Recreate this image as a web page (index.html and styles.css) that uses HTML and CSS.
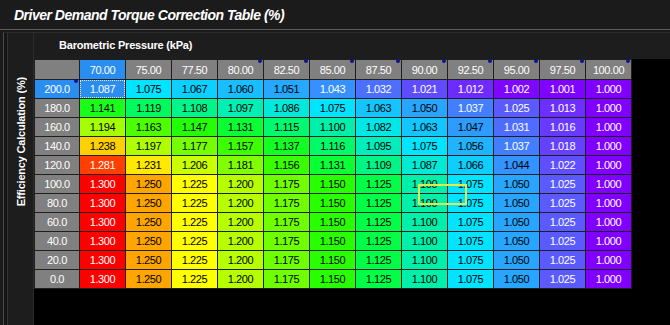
FILE: index.html
```html
<!DOCTYPE html>
<html>
<head>
<meta charset="utf-8">
<link rel="stylesheet" href="styles.css">
</head>
<body>
<div class="title">Driver Demand Torque Correction Table (%)</div>
<div class="frame">
  <div class="outer">
    <div class="inner">
      <div class="side"><span class="vlabel">Efficiency Calculation (%)</span></div>
      <div class="main">
        <div class="xlabel">Barometric Pressure (kPa)</div>
        <div class="area">
          <div class="mapwrap">
            <div class="map" id="map"></div>
            <div class="cursor"></div>
          </div>
        </div>
      </div>
    </div>
  </div>
</div>
<script src="script.js"></script>
</body>
</html>
```
FILE: styles.css
```css
html, body {
  margin: 0;
  padding: 0;
  background: #1b1b1b;
  overflow: hidden;
}
body {
  height: 325px;
  display: flex;
  flex-direction: column;
  font-family: "Liberation Sans", Arial, sans-serif;
  color: #fff;
}
.title {
  height: 29px;
  flex: none;
  padding-left: 14px;
  font-style: italic;
  font-weight: bold;
  font-size: 14px;
  line-height: 30px;
  letter-spacing: -0.5px;
  white-space: nowrap;
}
.frame {
  flex: 1;
  display: flex;
  flex-direction: column;
  border-top: 1px solid #5a5a5a;
  padding: 2px 0 0 3px;
  min-height: 0;
}
.outer {
  flex: 1;
  display: flex;
  border-left: 1px solid #4a4a4a;
  border-top: 1px solid #2c2c2c;
  padding-left: 3px;
  background: #151515;
  min-height: 0;
}
.inner {
  flex: 1;
  display: flex;
  border-left: 1px solid #303030;
  background: #1d1d1d;
  min-height: 0;
}
.side {
  width: 26px;
  flex: none;
  border-right: 1px solid #2c2c2c;
  display: flex;
  justify-content: center;
  align-items: flex-start;
  padding-top: 44px;
  box-sizing: border-box;
}
.vlabel {
  writing-mode: vertical-rl;
  transform: rotate(180deg);
  font-weight: bold;
  font-size: 11px;
  letter-spacing: -0.2px;
  white-space: nowrap;
}
.main {
  flex: 1;
  display: flex;
  flex-direction: column;
  min-width: 0;
}
.xlabel {
  height: 26px;
  flex: none;
  padding-left: 25px;
  font-weight: bold;
  font-size: 11px;
  line-height: 24px;
  letter-spacing: -0.2px;
  white-space: nowrap;
}
.area {
  flex: 1;
  background: #000;
}
.mapwrap {
  position: relative;
  display: inline-block;
}
.map {
  display: grid;
  grid-template-columns: 44px repeat(12, 45px);
  grid-template-rows: 19px repeat(11, 18px);
  gap: 1px;
  padding: 1px;
  background: #1f1f1f;
  font-size: 11px;
  letter-spacing: -0.4px;
}
.cell {
  position: relative;
  display: flex;
  align-items: center;
  justify-content: center;
  color: #000;
}
.cell.lt {
  color: #fff;
}
.hdr {
  background: #808080;
  color: #fff;
}
.hdr.sel, .cell.focus {
  background: #2a8df0;
  color: #fff;
}
.cell.focus {
  outline: 1px dotted #e8e8e8;
  outline-offset: -1px;
}
.hdr.dot::after {
  content: "";
  position: absolute;
  top: -1px;
  right: 1px;
  width: 4px;
  height: 4px;
  border-radius: 50%;
  background: #10108c;
}
.cursor {
  position: absolute;
  left: 384px;
  top: 125px;
  width: 49px;
  height: 21px;
  box-sizing: border-box;
  border: 2px solid #e2ea4c;
}
```
FILE: script.js
```js
var xs = ["70.00","75.00","77.50","80.00","82.50","85.00","87.50","90.00","92.50","95.00","97.50","100.00"];
var ys = ["200.0","180.0","160.0","140.0","120.0","100.0","80.0","60.0","40.0","20.0","0.0"];
var base = [1.300,1.250,1.225,1.200,1.175,1.150,1.125,1.100,1.075,1.050,1.025,1.000];
var data = [
  [1.087,1.075,1.067,1.060,1.051,1.043,1.032,1.021,1.012,1.002,1.001,1.000],
  [1.141,1.119,1.108,1.097,1.086,1.075,1.063,1.050,1.037,1.025,1.013,1.000],
  [1.194,1.163,1.147,1.131,1.115,1.100,1.082,1.063,1.047,1.031,1.016,1.000],
  [1.238,1.197,1.177,1.157,1.137,1.116,1.095,1.075,1.056,1.037,1.018,1.000],
  [1.281,1.231,1.206,1.181,1.156,1.131,1.109,1.087,1.066,1.044,1.022,1.000],
  base, base, base, base, base, base
];
var stops = [
  [1.300,255,0,0],
  [1.250,255,165,0],
  [1.225,255,255,0],
  [1.150,40,255,0],
  [1.125,0,255,70],
  [1.100,0,240,170],
  [1.075,0,228,255],
  [1.050,40,165,255],
  [1.025,90,90,255],
  [1.000,128,0,255]
];
function colour(v) {
  for (var i = 0; i < stops.length - 1; i++) {
    var a = stops[i], b = stops[i + 1];
    if (v <= a[0] && v >= b[0]) {
      var t = (a[0] - v) / (a[0] - b[0]);
      var r = Math.round(a[1] + (b[1] - a[1]) * t);
      var g = Math.round(a[2] + (b[2] - a[2]) * t);
      var bl = Math.round(a[3] + (b[3] - a[3]) * t);
      return "rgb(" + r + "," + g + "," + bl + ")";
    }
  }
  return v > 1.3 ? "rgb(255,0,0)" : "rgb(128,0,255)";
}
var map = document.getElementById("map");
function add(text, cls, bg) {
  var d = document.createElement("div");
  d.className = "cell " + cls;
  d.textContent = text;
  if (bg) d.style.background = bg;
  map.appendChild(d);
}
add("", "hdr");
xs.forEach(function (x, i) {
  add(x, "hdr" + (i === 0 ? " sel" : "") + (i >= 3 ? " dot" : ""));
});
ys.forEach(function (y, r) {
  add(y, "hdr" + (r === 0 ? " sel dot" : ""));
  data[r].forEach(function (v, c) {
    if (r === 0 && c === 0) {
      add(v.toFixed(3), "focus");
      return;
    }
    var light = v >= 1.27 || v <= 1.043;
    add(v.toFixed(3), light ? "lt" : "", colour(v));
  });
});
```
